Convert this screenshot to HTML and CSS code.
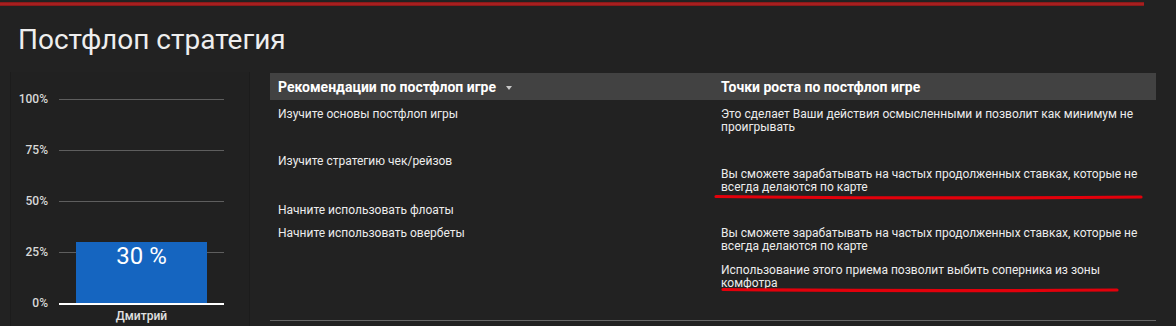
FILE: index.html
```html
<!DOCTYPE html>
<html lang="ru">
<head>
    <meta charset="utf-8">
    <title>Постфлоп стратегия</title>
    <link rel="stylesheet" href="styles.css">
</head>
<body>
    <div class="top-rule"></div>
    <h1 class="title">Постфлоп стратегия</h1>

    <div class="main">
        <div class="chart-card">
            <div class="chart-body">
                <div class="axis">
                    <span>100%</span>
                    <span>75%</span>
                    <span>50%</span>
                    <span>25%</span>
                    <span>0%</span>
                </div>
                <div class="plot-col">
                    <div class="plot">
                        <div class="bar" style="height: 30%;">30 %</div>
                    </div>
                    <div class="bar-label">Дмитрий</div>
                </div>
            </div>
        </div>

        <table class="tips">
            <thead>
                <tr>
                    <th>Рекомендации по постфлоп игре <span class="caret"></span></th>
                    <th>Точки роста по постфлоп игре</th>
                </tr>
            </thead>
            <tbody>
                <tr>
                    <td>Изучите основы постфлоп игры</td>
                    <td>
                        <p class="note">Это сделает Ваши действия осмысленными и позволит как минимум не проигрывать</p>
                    </td>
                </tr>
                <tr>
                    <td>Изучите стратегию чек/рейзов</td>
                    <td>
                        <p class="note late">Вы сможете зарабатывать на частых продолженных ставках, которые не всегда делаются по карте</p>
                    </td>
                </tr>
                <tr>
                    <td>Начните использовать флоаты</td>
                    <td></td>
                </tr>
                <tr>
                    <td>Начните использовать овербеты</td>
                    <td>
                        <p class="note">Вы сможете зарабатывать на частых продолженных ставках, которые не всегда делаются по карте</p>
                        <p class="note">Использование этого приема позволит выбить соперника из зоны комфотра</p>
                    </td>
                </tr>
            </tbody>
        </table>
    </div>

    <!-- hand-drawn highlight strokes -->
    <svg class="marks" width="1176" height="326" viewBox="0 0 1176 326">
        <path d="M716 196.5 Q930 199 1141 197" />
        <path d="M723 289.5 Q920 291.5 1117 290" />
    </svg>
</body>
</html>
```

FILE: styles.css
```css
* { box-sizing: border-box; margin: 0; padding: 0; }
body {
    width: 1176px;
    height: 326px;
    overflow: hidden;
    background: #222;
    color: #ececec;
    font-family: Roboto, 'Liberation Sans', sans-serif;
    position: relative;
}
.top-rule {
    width: 1144px;
    height: 4px;
    margin-top: 2px;
    background: linear-gradient(#7d1717, #b52222 50%, #7d1717);
}
.title {
    font-size: 28px;
    font-weight: 400;
    line-height: 34px;
    color: #eee;
    margin: 17px 0 15px 18px;
}
.main {
    display: flex;
    gap: 20px;
    padding-left: 10px;
}

/* chart */
.chart-card {
    width: 240px;
    height: 260px;
    padding-top: 20px;
    background: #212121;
    border-left: 1px solid #1c1c1c;
    border-right: 1px solid #1c1c1c;
}
.chart-body { display: flex; align-items: flex-start; }
.axis {
    width: 37px;
    height: 218px;
    display: flex;
    flex-direction: column;
    justify-content: space-between;
    text-align: right;
    font-size: 12px;
    font-weight: 500;
    line-height: 14px;
    color: #d8d8d8;
}
.plot-col { margin: 7px 0 0 11px; width: 165px; }
.plot {
    height: 206px;
    border-bottom: 2px solid #fff;
    background: repeating-linear-gradient(to bottom, #5e5e5e 0, #5e5e5e 1px, transparent 1px, transparent 51px);
    display: flex;
    align-items: flex-end;
    justify-content: center;
}
.bar {
    width: 131px;
    background: #1565c0;
    color: #fff;
    font-size: 24px;
    line-height: 28px;
    text-align: center;
}
.bar-label {
    margin-top: 5px;
    text-align: center;
    font-size: 12px;
    font-weight: 500;
    line-height: 13px;
    color: #e2e2e2;
}

/* table */
.tips {
    width: 886px;
    table-layout: fixed;
    border-collapse: collapse;
    align-self: flex-start;
    margin-top: 1px;
}
.tips th {
    height: 27px;
    padding: 0 8px;
    background: #424242;
    text-align: left;
    font-size: 14px;
    font-weight: 700;
    color: #fff;
}
.caret {
    display: inline-block;
    vertical-align: middle;
    margin-left: 7px;
    border-left: 3px solid transparent;
    border-right: 3px solid transparent;
    border-top: 4px solid #c8c8c8;
}
.tips td {
    vertical-align: top;
    padding: 8px 8px 2px;
    font-size: 12px;
    line-height: 13px;
    color: #ececec;
}
.tips tr:last-child td {
    padding-bottom: 19px;
    border-bottom: 1px solid #666;
}
.note { margin-bottom: 11px; }
.note.late { margin: 13px 0 0; }

.marks {
    position: absolute;
    top: 0;
    left: 0;
    pointer-events: none;
}
.marks path {
    fill: none;
    stroke: #e3000b;
    stroke-width: 3.2;
    stroke-linecap: round;
}
```
